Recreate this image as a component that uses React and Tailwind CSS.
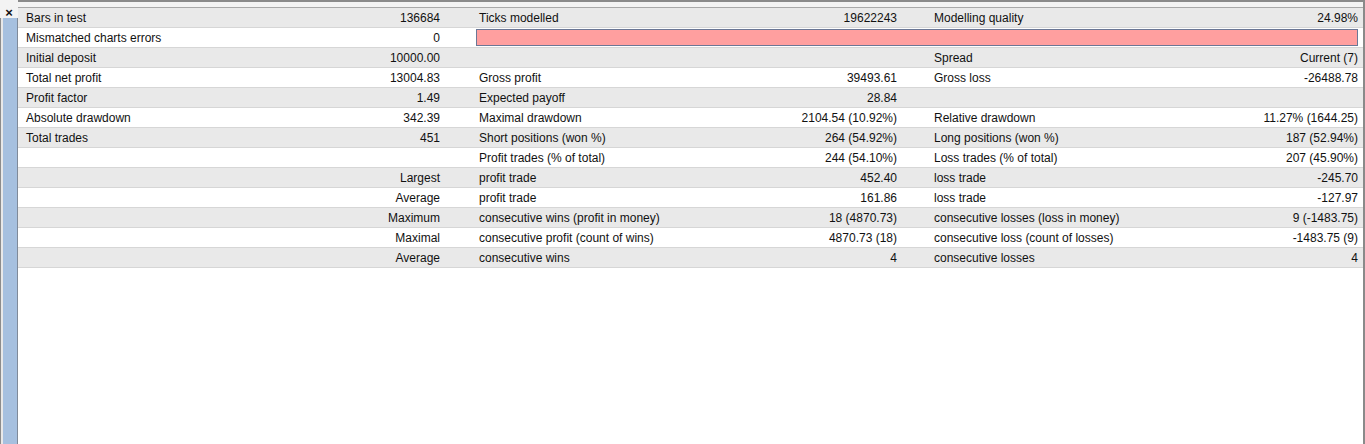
import React from 'react';

const rows = [
    ['Bars in test', '136684', 'Ticks modelled', '19622243', 'Modelling quality', '24.98%'],
    ['Mismatched charts errors', '0', null],
    ['Initial deposit', '10000.00', '', '', 'Spread', 'Current (7)'],
    ['Total net profit', '13004.83', 'Gross profit', '39493.61', 'Gross loss', '-26488.78'],
    ['Profit factor', '1.49', 'Expected payoff', '28.84', '', ''],
    ['Absolute drawdown', '342.39', 'Maximal drawdown', '2104.54 (10.92%)', 'Relative drawdown', '11.27% (1644.25)'],
    ['Total trades', '451', 'Short positions (won %)', '264 (54.92%)', 'Long positions (won %)', '187 (52.94%)'],
    ['', '', 'Profit trades (% of total)', '244 (54.10%)', 'Loss trades (% of total)', '207 (45.90%)'],
    ['', 'Largest', 'profit trade', '452.40', 'loss trade', '-245.70'],
    ['', 'Average', 'profit trade', '161.86', 'loss trade', '-127.97'],
    ['', 'Maximum', 'consecutive wins (profit in money)', '18 (4870.73)', 'consecutive losses (loss in money)', '9 (-1483.75)'],
    ['', 'Maximal', 'consecutive profit (count of wins)', '4870.73 (18)', 'consecutive loss (count of losses)', '-1483.75 (9)'],
    ['', 'Average', 'consecutive wins', '4', 'consecutive losses', '4'],
];

const Row = ({ r, i }) => {
    const bg = i % 2 === 0 ? 'bg-[#e9e9e9]' : 'bg-white';
    return (
        <div className={`flex h-[20px] items-center border-b border-[#d6d6d6] ${bg}`}>
            {/* column 1 */}
            <div className="flex w-[458px] shrink-0 justify-between pl-2 pr-[36px]">
                <span>{r[0]}</span>
                <span>{r[1]}</span>
            </div>
            {r[2] === null ? (
                <div className="mr-[5px] h-[17px] flex-1 border border-[#6b7796] bg-[#ff9f9f]"></div>
            ) : (
                <>
                    <div className="flex w-[455px] shrink-0 justify-between pl-[3px] pr-[34px]">
                        <span>{r[2]}</span>
                        <span>{r[3]}</span>
                    </div>
                    <div className="flex flex-1 justify-between pl-[3px] pr-[5px]">
                        <span>{r[4]}</span>
                        <span>{r[5]}</span>
                    </div>
                </>
            )}
        </div>
    );
};

const App = () => {
    return (
        <div
            className="flex h-[444px] w-[1365px] overflow-hidden bg-white text-[12px] leading-none text-[#111]"
            style={{ fontFamily: '"Liberation Sans", Arial, sans-serif' }}
        >
            {/* left strip */}
            <div className="flex w-[18px] shrink-0 flex-col">
                <div className="flex h-[18px] items-start justify-center bg-[#f3f3f3] pt-[6px] text-[13px] font-bold">×</div>
                <div className="flex flex-1">
                    <div className="w-[1px] bg-[#8c8c8c]"></div>
                    <div className="w-[2px] bg-[#e8e8e8]"></div>
                    <div className="flex-1 bg-[#a6c0df]"></div>
                    <div className="w-[1px] bg-[#7f8a99]"></div>
                </div>
            </div>

            {/* report */}
            <div className="flex flex-1 flex-col border-r-[2px] border-[#8a8a8a]">
                <div className="h-[8px] shrink-0 border-t-[2px] border-b border-t-[#8a8a8a] border-b-[#a8a8a8] bg-[#f3f3f3]"></div>
                {rows.map((r, i) => (
                    <Row key={i} r={r} i={i} />
                ))}
                <div className="flex-1 bg-white"></div>
            </div>
        </div>
    );
};

export default App;
